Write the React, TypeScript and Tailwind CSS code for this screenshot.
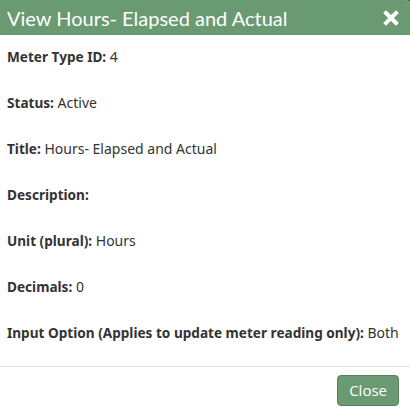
const rows: { label: string; value: string }[] = [
  { label: "Meter Type ID:", value: "4" },
  { label: "Status:", value: "Active" },
  { label: "Title:", value: "Hours- Elapsed and Actual" },
  { label: "Description:", value: "" },
  { label: "Unit (plural):", value: "Hours" },
  { label: "Decimals:", value: "0" },
  { label: "Input Option (Applies to update meter reading only):", value: "Both" },
];

export default function App() {
  return (
    <div className="w-[410px] h-[415px] bg-[#3a3a3a]">
      <div className="w-[410px] h-[415px] bg-white rounded-tr-[4px] overflow-hidden flex flex-col text-[#333333]">
        <div className="h-[35px] bg-[#6a9a71] flex items-center justify-between pl-[7px] pr-[11px]">
          <h2 className="text-[20px] leading-none text-white font-['Lato',sans-serif]">
            View Hours- Elapsed and Actual
          </h2>
          <svg width="16" height="16" viewBox="0 0 16 16" className="text-white">
            <path d="M3 3 L13 13 M13 3 L3 13" stroke="currentColor" strokeWidth="4" strokeLinecap="square" />
          </svg>
        </div>
        <div className="pt-[12px] pb-[23px] px-[7px] flex flex-col gap-[26px] border-b border-[#e5e5e5] font-['Noto_Sans',sans-serif]">
          {rows.map((r) => (
            <p key={r.label} className="text-[14px] leading-[20px] whitespace-nowrap">
              <span className="font-bold text-[13.6px]">{r.label}</span>
              {r.value ? " " + r.value : ""}
            </p>
          ))}
        </div>
        <div className="flex justify-end pt-[8px] pr-[11px]">
          <button className="h-[31px] px-[11px] bg-[#6a9a71] border border-[#55805c] rounded-[4px] text-white text-[15px] font-['Open_Sans',sans-serif]">
            Close
          </button>
        </div>
      </div>
    </div>
  );
}
